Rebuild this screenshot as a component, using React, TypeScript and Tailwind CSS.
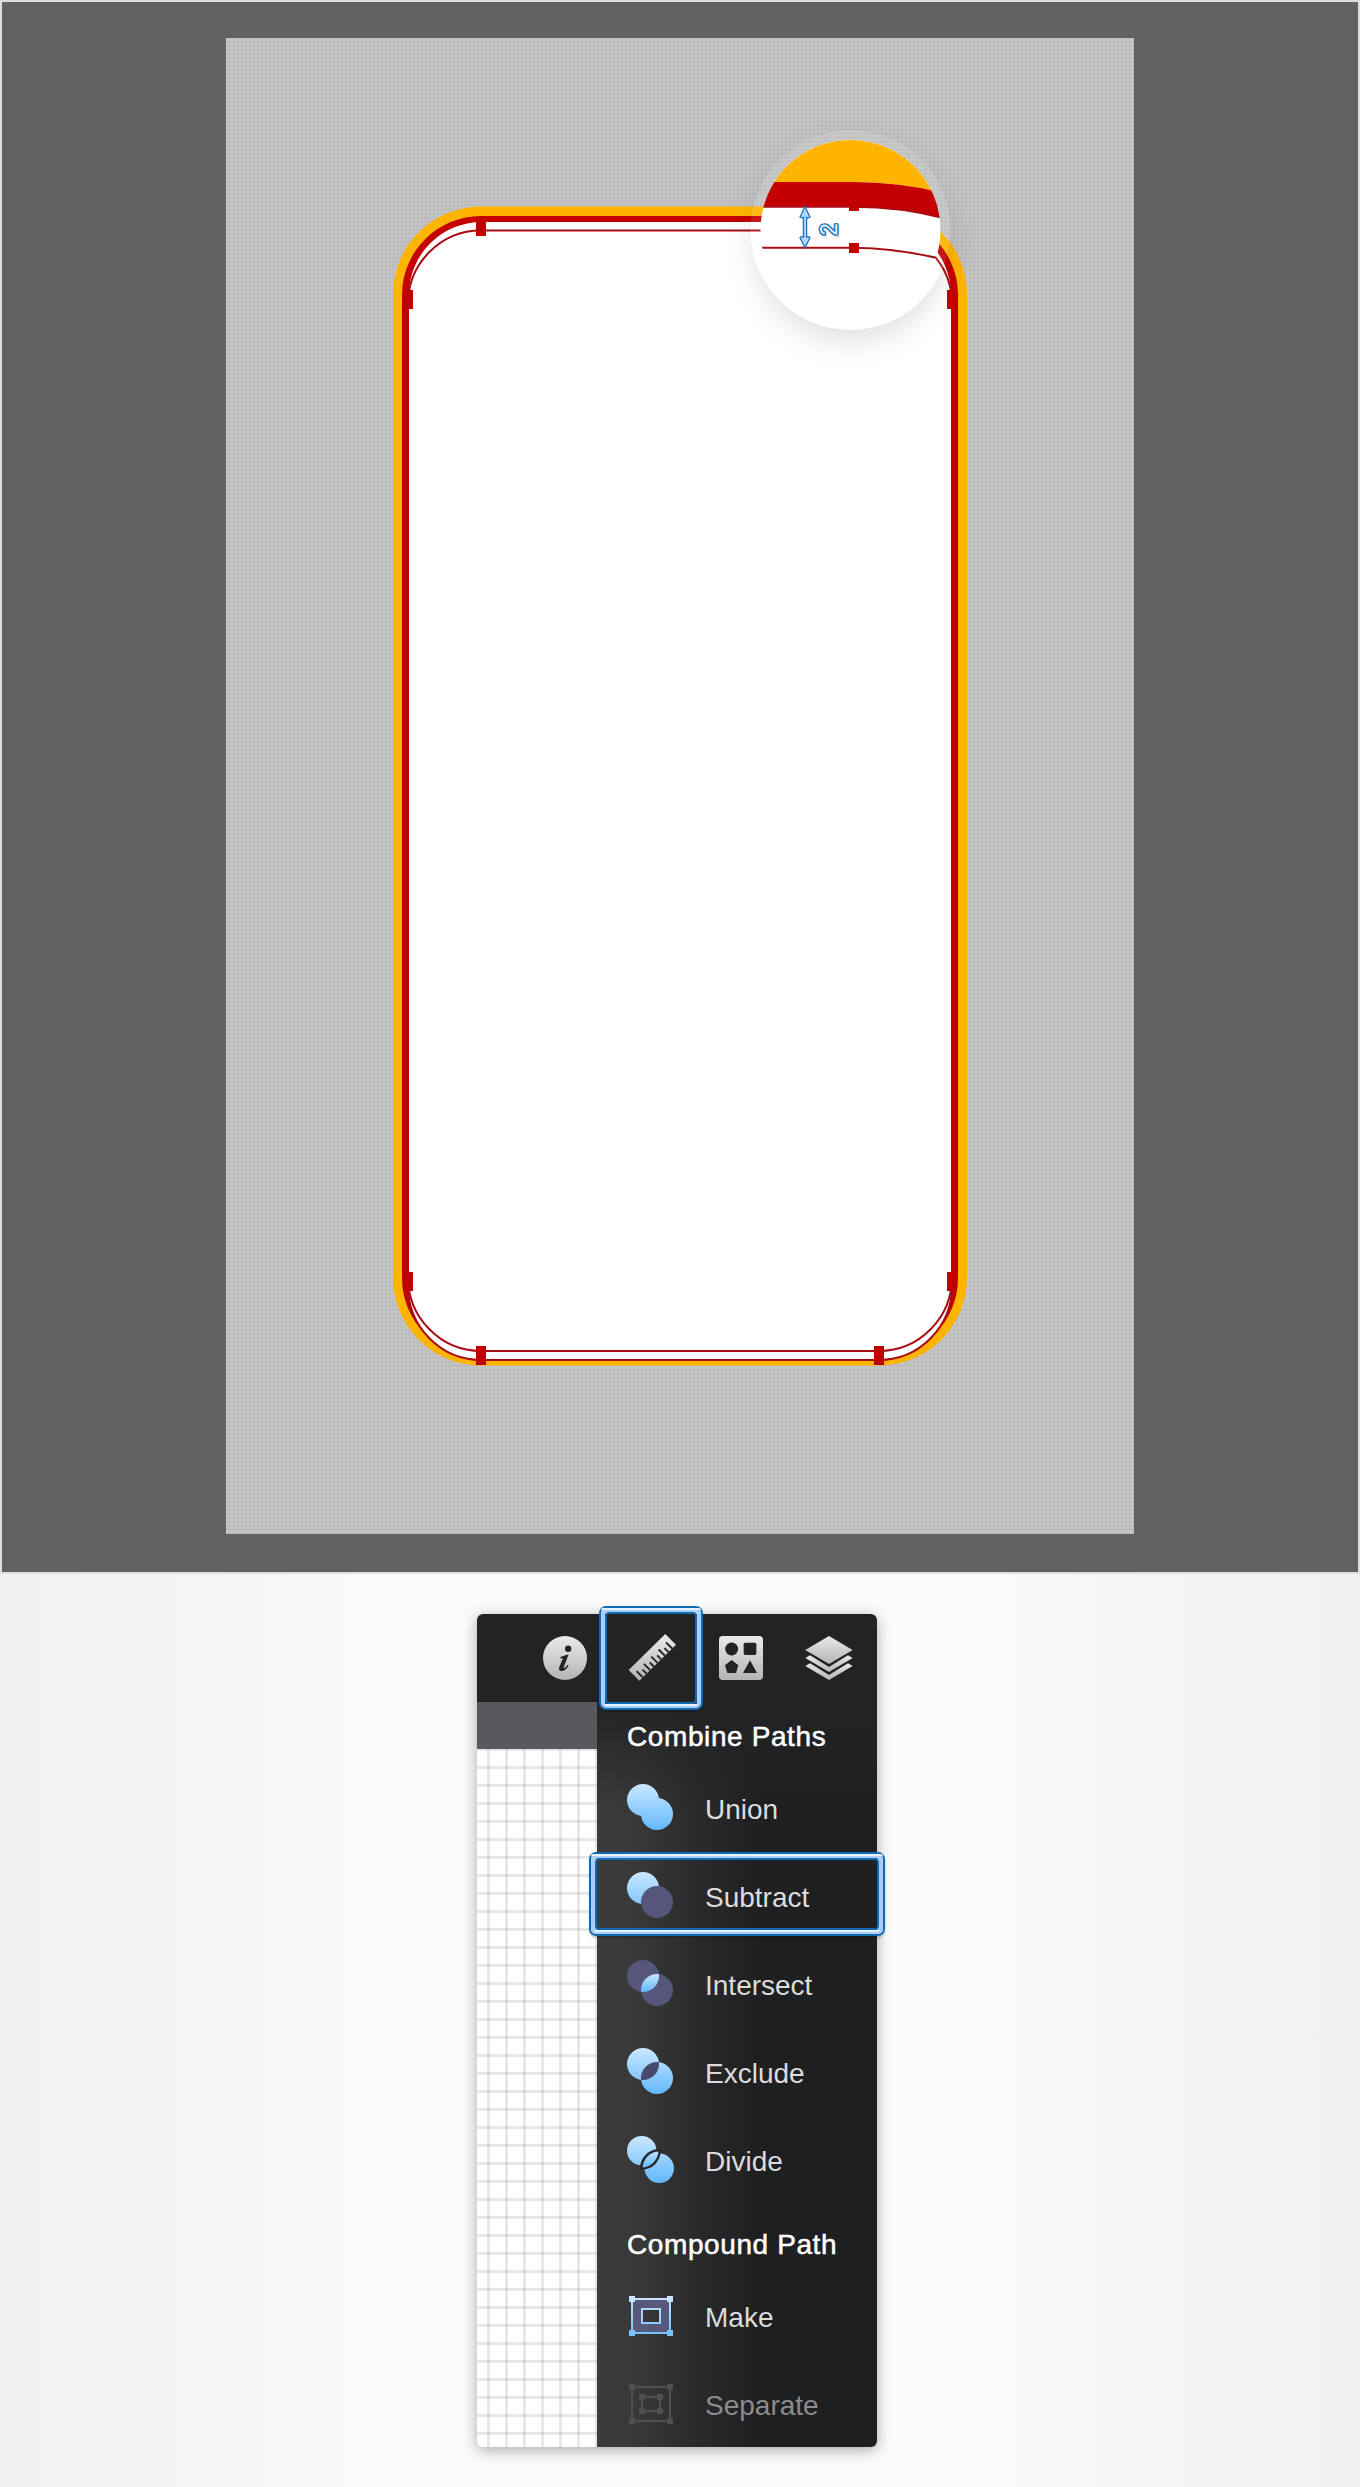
import React from "react";

const LIGHT = "url(#sky)";

function Gradients() {
  return (
    <svg className="absolute h-0 w-0" aria-hidden="true">
      <defs>
        <linearGradient id="silver" x1="0" y1="0" x2="0" y2="1">
          <stop offset="0" stopColor="#eaeaea" />
          <stop offset="1" stopColor="#b4b4b5" />
        </linearGradient>
        <linearGradient id="sky" gradientUnits="userSpaceOnUse" x1="0" y1="0" x2="0" y2="46">
          <stop offset="0" stopColor="#cbe7ff" />
          <stop offset="1" stopColor="#62b9fd" />
        </linearGradient>
        <linearGradient id="skyLens" gradientUnits="userSpaceOnUse" x1="0" y1="14" x2="0" y2="32">
          <stop offset="0" stopColor="#c6e6ff" />
          <stop offset="1" stopColor="#62b9fd" />
        </linearGradient>
        <clipPath id="lens">
          <circle cx="16" cy="16" r="16" />
        </clipPath>
        <clipPath id="lensOuter">
          <circle cx="14.7" cy="14.7" r="19" />
        </clipPath>
        <clipPath id="lensInner">
          <circle cx="14.7" cy="14.7" r="16.7" />
        </clipPath>
      </defs>
    </svg>
  );
}

function Artwork() {
  const nodes = [
    [481, 226], [481, 231], [408, 295], [408, 304], [952, 295], [952, 304],
    [408, 1277], [408, 1286], [952, 1277], [952, 1286],
    [481, 1351], [481, 1360], [879, 1351], [879, 1360],
  ];
  return (
    <svg className="block h-[1496px] w-[908px]" viewBox="226 38 908 1496">
      <defs>
        <clipPath id="magnified">
          <circle cx="850.5" cy="230" r="90" />
        </clipPath>
        <filter id="soft" x="-50%" y="-50%" width="200%" height="200%">
          <feGaussianBlur stdDeviation="18" />
        </filter>
        <mask id="outsideLoupe" maskUnits="userSpaceOnUse" x="650" y="80" width="400" height="400">
          <rect x="650" y="80" width="400" height="400" fill="#fff" />
          <circle cx="850.5" cy="230" r="100" fill="#000" />
        </mask>
      </defs>
      <rect x="393" y="206.5" width="574" height="1159" rx="88" fill="#ffb400" />
      <rect x="402" y="216" width="556" height="1141" rx="79" fill="#c40000" />
      <path d="M408 1286A73 74 0 0 0 481 1360H879A73 74 0 0 0 952 1286L951 294.5A72.5 72.5 0 0 0 878.5 222H481.5A72.5 72.5 0 0 0 409 294.5Z" fill="#fff" />
      <g fill="none" stroke="#a80d14" strokeWidth="2">
        <path d="M408 295V1277A73 74 0 0 0 481 1351H879A73 74 0 0 0 952 1277V295" />
        <path d="M408 304A73 73.5 0 0 1 481 230.5H879A73 73.5 0 0 1 952 304V1286A73 74 0 0 1 879 1360H481A73 74 0 0 1 408 1286Z" />
      </g>
      <g fill="#c00000">
        {nodes.map(([x, y]) => (
          <rect key={x + "-" + y} x={x - 5} y={y - 5} width="10" height="10" />
        ))}
        <rect x="402" y="300" width="7" height="977" />
        <rect x="951" y="300" width="7" height="977" />
      </g>

      <g mask="url(#outsideLoupe)">
        <circle cx="850.5" cy="244" r="92" fill="#000" opacity="0.16" filter="url(#soft)" />
      </g>
      <circle cx="850.5" cy="230" r="100" fill="#fff" opacity="0.09" />

      <g clipPath="url(#magnified)">
        <rect x="750" y="130" width="201" height="201" fill="#fff" />
        <path d="M750 130H950V195Q905 182 854 182H750Z" fill="#ffb400" />
        <path d="M750 182H854Q905 182 950 195V220Q905 207 854 207H750Z" fill="#c40000" />
        <path
          d="M750 206.8H854Q905 207 950 220M762 247.7H854Q895 248 940 258.6"
          fill="none"
          stroke="#a80d14"
          strokeWidth="2"
        />
      </g>
      <rect x="849" y="202" width="10" height="9" fill="#c00000" />
      <rect x="849" y="243" width="10" height="10" fill="#c00000" />
      <path
        d="M805 206.5Q807.5 212 810 217Q808 218.5 806.6 217.5V237Q808 236 810 237.5Q808 242 805 247.5Q802 242 800 237.5Q802 236 803.4 237V217.5Q802 218.5 800 217Q802.5 212 805 206.5Z"
        fill="#b7d3fd"
        stroke="#1b75bc"
        strokeWidth="1.3"
      />
      <g transform="translate(836.5 235.5) rotate(-90) scale(0.92 1)" fontFamily="Liberation Sans" fontSize="24">
        <text x="-2.5" y="1" fill="#dcdcdc" stroke="#e2e2e2" strokeWidth="2.5">2</text>
        <text x="0" y="0" fill="#e4effc" stroke="#1b75bc" strokeWidth="3" strokeLinejoin="round">2</text>
        <text x="0" y="0" fill="#e4effc">2</text>
      </g>
    </svg>
  );
}

function InfoIcon() {
  return (
    <svg className="size-11" viewBox="0 0 44 44">
      <circle cx="22" cy="22" r="22" fill="url(#silver)" />
      <circle cx="25.2" cy="12.7" r="3.2" fill="#222325" />
      <path
        d="M17 21.5C19.5 20 22.5 19.3 25.6 18.6L20.8 31C20.4 32.3 21.2 32.3 22.2 31.6Q23.3 30.7 24.6 28.7L25.6 29.4C23.5 33 21.2 35 18.4 35C16 35 15.5 33.2 16.3 31L19.6 23.3C20 22.1 19 22.2 17.3 22.6Z"
        fill="#222325"
      />
    </svg>
  );
}

function RulerIcon() {
  const ticks = Array.from({ length: 9 }, (_, i) => i);
  return (
    <svg className="size-12" viewBox="0 0 48 48">
      <path d="M37.3 0L48 10.7L11.3 46.7L0.7 36Z" fill="url(#silver)" />
      <g stroke="#222325" strokeWidth="1.9">
        {ticks.map((i) => {
          const x = 14.8 + i * 3.67;
          const y = 43.3 - i * 3.6;
          const length = i % 2 === 0 ? 6.2 : 4;
          return <path key={i} d={`M${x} ${y}l${-length} ${-length}`} />;
        })}
      </g>
    </svg>
  );
}

function ShapesIcon() {
  return (
    <svg className="size-11" viewBox="0 0 132 132">
      <rect width="132" height="132" rx="11" fill="url(#silver)" />
      <g fill="#222325">
        <circle cx="38" cy="39" r="19.5" />
        <rect x="74" y="20" width="38" height="37" rx="5" />
        <path d="M38 72L58 88L51 111H25L18 88Z" />
        <path d="M93 73L114 111H72Z" />
      </g>
    </svg>
  );
}

function LayersIcon() {
  return (
    <svg className="h-11 w-12" viewBox="0 0 144 132">
      <g fill="url(#silver)">
        <path d="M72 0L143 42L72 84L1 42Z" />
        <path d="M1 66L15 58L72 93L129 58L143 66L72 108Z" />
        <path d="M1 90L15 82L72 117L129 82L143 90L72 132Z" />
      </g>
    </svg>
  );
}

function CircleIcon({ kind }: { kind: string }) {
  const muted = "#55567a";
  return (
    <svg className="size-12 shrink-0" viewBox="0 0 48 48">
      {kind === "Union" && (
        <g fill={LIGHT}>
          <circle cx="16" cy="16" r="16" />
          <circle cx="30" cy="30" r="16" />
        </g>
      )}
      {kind === "Subtract" && (
        <g>
          <circle cx="16" cy="16" r="16" fill={LIGHT} />
          <circle cx="30" cy="30" r="16" fill={muted} />
        </g>
      )}
      {kind === "Intersect" && (
        <g>
          <circle cx="16" cy="16" r="16" fill={muted} />
          <circle cx="30" cy="30" r="16" fill={muted} />
          <circle cx="30" cy="30" r="16" fill="url(#skyLens)" clipPath="url(#lens)" />
        </g>
      )}
      {kind === "Exclude" && (
        <g>
          <circle cx="16" cy="16" r="16" fill={LIGHT} />
          <circle cx="30" cy="30" r="16" fill={LIGHT} />
          <circle cx="30" cy="30" r="16" fill="#48496b" clipPath="url(#lens)" />
        </g>
      )}
      {kind === "Divide" && (
        <g>
          <circle cx="14.7" cy="14.7" r="14.7" fill={LIGHT} />
          <circle cx="32.3" cy="32.3" r="14.7" fill={LIGHT} />
          <circle cx="32.3" cy="32.3" r="19.3" fill="#25282c" clipPath="url(#lensOuter)" />
          <circle cx="32.3" cy="32.3" r="16.7" fill="url(#skyLens)" clipPath="url(#lensInner)" />
        </g>
      )}
    </svg>
  );
}

function CompoundIcon({ disabled }: { disabled?: boolean }) {
  const paint = disabled ? "#505052" : LIGHT;
  return (
    <svg className="ml-0.5 mr-0.5 h-10 w-11 shrink-0" viewBox="0 0 44 40">
      {!disabled && <path d="M3 3H41V37H3ZM13 13V27H31V13Z" fill="#58587a" fillRule="evenodd" />}
      <path d="M3 3H41V37H3Z" fill="none" stroke={paint} strokeWidth="2" />
      <path d="M13 13H31V27H13Z" fill="none" stroke={paint} strokeWidth="2" />
      {disabled && <path d="M10 10h6v6h-6zM28 10h6v6h-6zM10 24h6v6h-6zM28 24h6v6h-6z" fill={paint} />}
      <path d="M0 0h6v6H0zM38 0h6v6h-6zM0 34h6v6H0zM38 34h6v6h-6z" fill={paint} />
    </svg>
  );
}

function Highlight({ className }: { className: string }) {
  return (
    <div className={"pointer-events-none absolute z-10 rounded-[7px] border-2 border-[#1169b0] shadow-[0_2px_2px_rgba(0,0,0,0.2)] " + className}>
      <div className="h-full rounded-[5px] border-4 border-[#a6cffb]">
        <div className="relative h-full">
          <div className="absolute -inset-x-1 -top-1 h-0.5 rounded-t-[4px] bg-[#e6f3ff]" />
          <div className="h-full rounded-[4px] border-2 border-[#1169b0]" />
          <div className="absolute inset-x-0 -bottom-0.5 h-0.5 bg-[#e6f3ff]" />
        </div>
      </div>
    </div>
  );
}

function Row({ label, icon, disabled }: { label: string; icon: React.ReactNode; disabled?: boolean }) {
  return (
    <li className="relative flex h-[88px] items-center pl-[30px]">
      {icon}
      <span className={"ml-[30px] pt-1 text-[28px] leading-8 " + (disabled ? "text-[#8b8b8c]" : "text-[#dcdcdd]")}>{label}</span>
      {label === "Subtract" && <Highlight className="-left-2 -right-2 top-0 h-[84px]" />}
    </li>
  );
}

const heading = "pl-[30px] text-[28px] leading-8 tracking-[0.6px] text-white [-webkit-text-stroke:0.5px_white]";

export default function App() {
  return (
    <div className="h-[2487px] w-[1360px] overflow-hidden bg-[linear-gradient(90deg,#f0f0f0,#f4f4f4_12%,#fafafa_28%,#fafafa_72%,#f4f4f4_88%,#f0f0f0)] font-['Liberation_Sans',Arial,sans-serif]">
      <Gradients />
      <section className="flex h-[1574px] justify-center border-2 border-[#dcdfe1] bg-[#616264] pt-9">
        <div className="h-[1496px] w-[908px] bg-[#c5c5c5] bg-[linear-gradient(90deg,transparent_3px,rgba(0,0,0,0.05)_3px),linear-gradient(transparent_3px,rgba(0,0,0,0.05)_3px)] bg-[size:4px_4px]">
          <Artwork />
        </div>
      </section>

      <section className="ml-[477px] mt-10 h-[833px] w-[400px] rounded-[6px] bg-white shadow-[0_3px_14px_rgba(0,0,0,0.32)]">
        <header className="relative flex h-[88px] items-center rounded-t-[6px] bg-[#222325]">
          <div className="ml-[66px] flex">
            <InfoIcon />
          </div>
          <div className="ml-[41px] flex">
            <RulerIcon />
          </div>
          <div className="ml-[43px] flex">
            <ShapesIcon />
          </div>
          <div className="ml-[42px] flex">
            <LayersIcon />
          </div>
          <Highlight className="-top-2 left-[122px] h-[104px] w-[104px]" />
        </header>
        <div className="flex h-[745px]">
          <div className="flex w-[120px] flex-col">
            <div className="h-[47px] bg-[#58595c]" />
            <div className="flex-1 rounded-bl-[6px] bg-[linear-gradient(90deg,rgba(0,0,0,0.09)_3px,transparent_3px),linear-gradient(rgba(0,0,0,0.09)_3px,transparent_3px)] bg-[size:18px_18px] bg-[position:10px_17px]" />
          </div>
          <div className="flex w-[280px] flex-col rounded-br-[6px] bg-[linear-gradient(#222325,rgba(34,35,37,0)_110px),linear-gradient(90deg,#3c3c3c,#383838_15%,#2a2a2c_35%,#1e1f21_58%)]">
            <h2 className={"mt-[19px] " + heading}>Combine Paths</h2>
            <ul className="mt-[11px]">
              {["Union", "Subtract", "Intersect", "Exclude", "Divide"].map((label) => (
                <Row key={label} label={label} icon={<CircleIcon kind={label} />} />
              ))}
            </ul>
            <h2 className={"mt-[25px] " + heading}>Compound Path</h2>
            <ul className="mt-[11px]">
              <Row label="Make" icon={<CompoundIcon />} />
              <Row label="Separate" disabled icon={<CompoundIcon disabled />} />
            </ul>
          </div>
        </div>
      </section>
    </div>
  );
}
